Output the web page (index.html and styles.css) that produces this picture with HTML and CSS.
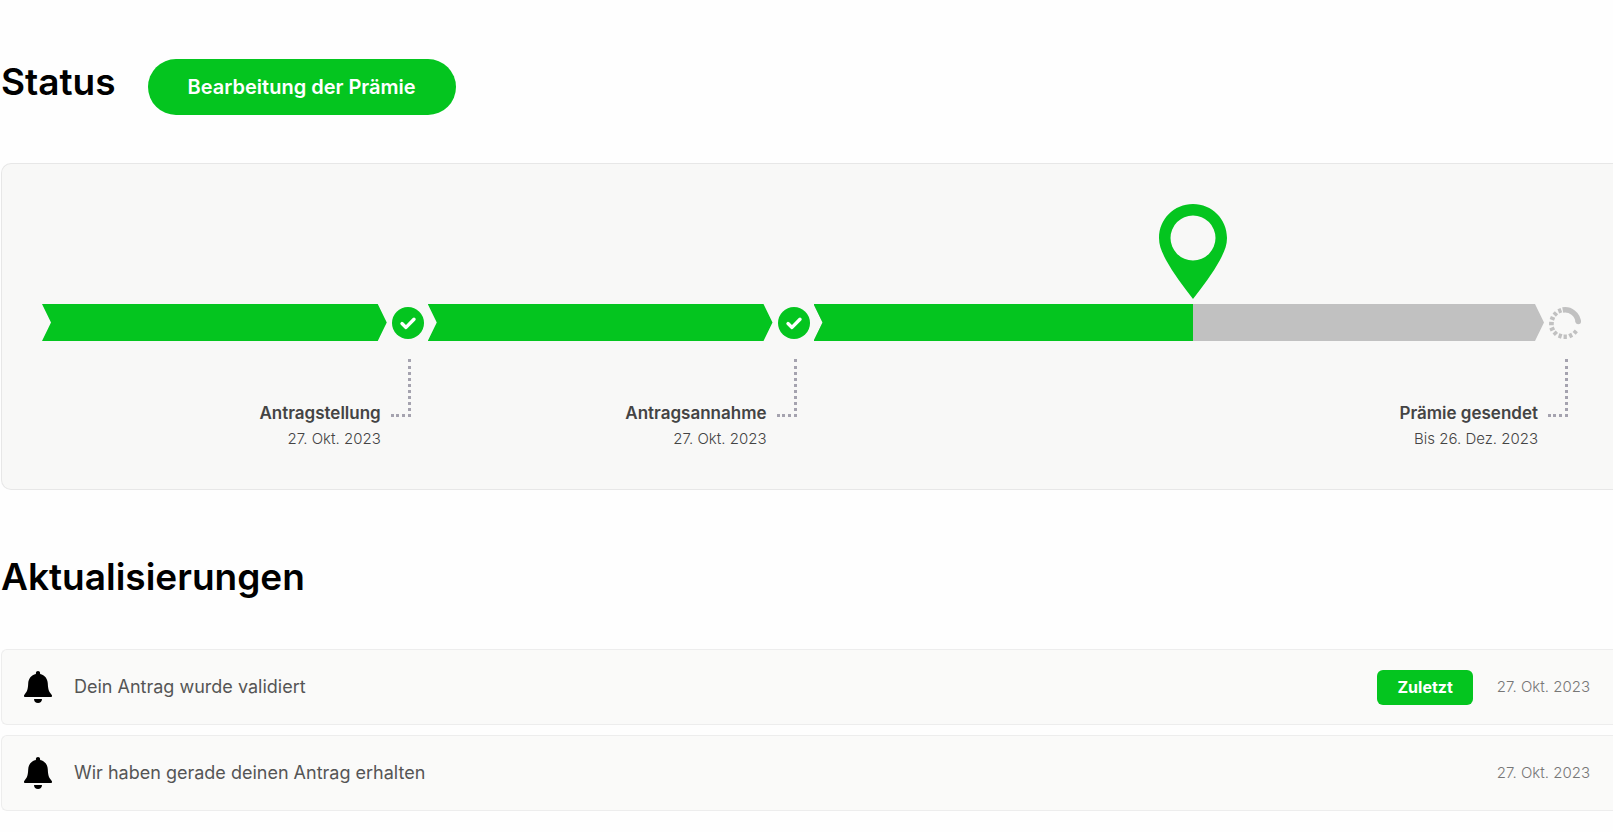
FILE: index.html
```html
<!DOCTYPE html>
<html lang="de">
<head>
  <meta charset="UTF-8">
  <meta name="viewport" content="width=device-width, initial-scale=1.0">
  <title>Status</title>
  <link rel="stylesheet" href="styles.css">
</head>
<body>
  <svg class="sprite" aria-hidden="true">
    <symbol id="check" viewBox="0 0 32 32">
      <circle cx="16" cy="16" r="16" fill="#04c51f"/>
      <path d="M10 16.600l4 3.800 8-8.200" fill="none" stroke="#fff" stroke-width="3.400" stroke-linecap="round" stroke-linejoin="round"/>
    </symbol>
    <symbol id="bell" viewBox="0 0 28 32">
      <path d="M14 0c1.200 0 2.100.9 2.100 2.100v.8c4.700 1 7.500 4.600 7.700 9.600.2 5.200 1 8.200 3.600 10.900.6.600.6 1.100.6 1.500 0 .7-.5 1.100-1.200 1.100H1.200C.5 26 0 25.600 0 24.900c0-.4 0-.9.600-1.500 2.600-2.700 3.400-5.700 3.600-10.900.2-5 3-8.600 7.700-9.600v-.8C11.900.9 12.800 0 14 0z"/>
      <path d="M10 28h8c0 2.500-1.700 4-4 4s-4-1.500-4-4z"/>
    </symbol>
  </svg>

  <main class="container">
    <div class="status-header">
      <h1>Status</h1>
      <span class="status-badge">Bearbeitung der Prämie</span>
    </div>

    <div class="progress">
      <div class="step">
        <div class="step-row">
          <div class="step-bar"><div class="step-fill"></div></div>
          <svg class="step-icon"><use href="#check"/></svg>
        </div>
        <div class="step-info">
          <div class="step-text">
            <strong>Antragstellung</strong>
            <span>27. Okt. 2023</span>
          </div>
          <div class="connector"></div>
        </div>
      </div>

      <div class="step">
        <div class="step-row">
          <div class="step-bar"><div class="step-fill"></div></div>
          <svg class="step-icon"><use href="#check"/></svg>
        </div>
        <div class="step-info">
          <div class="step-text">
            <strong>Antragsannahme</strong>
            <span>27. Okt. 2023</span>
          </div>
          <div class="connector"></div>
        </div>
      </div>

      <div class="step">
        <div class="step-row">
          <div class="step-track">
            <div class="step-bar"><div class="step-fill" style="width: 52%"></div></div>
            <svg class="pin" style="left: 52%" viewBox="0 0 68 95">
              <path fill="#04c51f" fill-rule="evenodd" d="M34 0C15 0 0 15 0 34c0 8 3 14 7 22 7 13 17 26 27 39 10-13 20-26 27-39 4-8 7-14 7-22C68 15 53 0 34 0zm0 11.500a22.500 22.500 0 1 1 0 45 22.500 22.500 0 0 1 0-45z"/>
            </svg>
          </div>
          <svg class="step-icon" viewBox="0 0 32 32" fill="none" stroke="#c1c1c1" stroke-width="5.500">
            <path d="M13.700 3A13.200 13.200 0 0 1 29.200 15"/>
            <path d="M29.300 14.600v0" stroke-linecap="round"/>
            <path stroke-width="3.300" d="M24.700 23.700l3.100 2.800M20.700 26.600l2 3.800M16.200 27.400V32M11.900 26.800l-1.500 4.300M7.900 24.700l-3.200 3.100M5.400 21.100L1 23M4.800 16.700L.1 16.500M5.600 12.200L1.300 10.500M8 8.500L4.700 5.400M11.700 5.900L10 1.600"/>
          </svg>
        </div>
        <div class="step-info">
          <div class="step-text">
            <strong>Prämie gesendet</strong>
            <span>Bis 26. Dez. 2023</span>
          </div>
          <div class="connector"></div>
        </div>
      </div>
    </div>

    <h2>Aktualisierungen</h2>
    <ul class="updates">
      <li class="update">
        <svg class="bell"><use href="#bell"/></svg>
        <span class="update-text">Dein Antrag wurde validiert</span>
        <span class="update-badge">Zuletzt</span>
        <span class="update-date">27. Okt. 2023</span>
      </li>
      <li class="update">
        <svg class="bell"><use href="#bell"/></svg>
        <span class="update-text">Wir haben gerade deinen Antrag erhalten</span>
        <span class="update-date">27. Okt. 2023</span>
      </li>
    </ul>
  </main>
</body>
</html>
```

FILE: styles.css
```css
* {
  box-sizing: border-box;
}
body {
  margin: 0;
  background-color: #fefefe;
  font-family: Inter, "Open Sans", sans-serif;
  color: #444;
}
.sprite {
  display: none;
}
.container {
  padding: 59px 0 0 1px;
}
h1, h2 {
  margin: 0;
  font-size: 37px;
  line-height: 46px;
  font-weight: 600;
  color: #000;
}
.status-header {
  display: flex;
  gap: 32px;
}
.status-badge {
  padding: 0 40px;
  border-radius: 28px;
  background-color: #04c51f;
  color: #fff;
  font-size: 20px;
  line-height: 56px;
  font-weight: 600;
}
.progress {
  display: grid;
  grid-template-columns: 1fr 1fr 2fr;
  margin-top: 48px;
  padding: 140px 28px 38px 40px;
  background-color: #f8f8f7;
  border: 1px solid #e7e7e7;
  border-right: none;
  border-radius: 10px 0 0 10px;
}
.step-row {
  display: flex;
  align-items: center;
  padding-right: 4px;
  gap: 5px;
}
.step-track {
  position: relative;
  flex: 1;
}
.step-bar {
  flex: 1;
  height: 37px;
  background-color: #c1c1c1;
  clip-path: polygon(0 0, calc(100% - 9px) 0, 100% 50%, calc(100% - 9px) 100%, 0 100%, 9px 50%);
}
.step-fill {
  height: 100%;
  background-color: #04c51f;
}
.step-icon {
  width: 32px;
  height: 32px;
}
.pin {
  position: absolute;
  bottom: calc(100% + 5px);
  width: 68px;
  height: 95px;
  transform: translateX(-50%);
}
.step-info {
  display: flex;
  justify-content: flex-end;
  gap: 10px;
  margin-top: 18px;
  padding-right: 17px;
}
.step-text {
  display: flex;
  flex-direction: column;
  padding-top: 42px;
  text-align: right;
  font-size: 15px;
  line-height: 25px;
}
.step-text strong {
  font-size: 17px;
  font-weight: 600;
}
.step-text span {
  font-weight: 300;
}
.connector {
  width: 20px;
  height: 58px;
  border: 3px dotted #a5a3af;
  border-top: none;
  border-left: none;
}
h2 {
  margin-top: 64px;
}
.updates {
  display: grid;
  gap: 10px;
  margin: 49px 0 0;
  padding: 0;
  list-style: none;
}
.update {
  display: flex;
  align-items: center;
  height: 76px;
  padding: 0 23px 0 22px;
  background-color: #fafaf9;
  border: 1px solid #ededed;
  border-right: none;
  border-radius: 6px 0 0 6px;
}
.bell {
  width: 28px;
  height: 32px;
}
.update-text {
  flex: 1;
  margin-left: 22px;
  font-size: 18px;
  line-height: 24px;
  color: #555;
}
.update-badge {
  margin-right: 24px;
  padding: 0 20px;
  border-radius: 6px;
  background-color: #04c51f;
  color: #fff;
  font-size: 16px;
  line-height: 35px;
  font-weight: 700;
}
.update-date {
  font-size: 15px;
  line-height: 24px;
  font-weight: 300;
  color: #777;
}
```
